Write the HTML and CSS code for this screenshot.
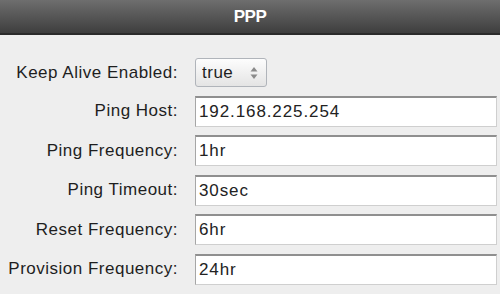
FILE: index.html
```html
<!DOCTYPE html>
<html lang="en">
<head>
  <meta charset="UTF-8">
  <title>PPP</title>
  <link rel="stylesheet" href="styles.css">
</head>
<body>

<div class="panel">
  <div class="panel-header">PPP</div>

  <form class="settings">
    <label class="field-label" for="keep-alive">Keep Alive Enabled:</label>
    <span class="select-wrap">
      <select id="keep-alive" class="select">
        <option selected>true</option>
        <option>false</option>
      </select>
      <svg class="select-arrows" viewBox="0 0 8 12" width="8" height="12">
        <polygon points="4,0 7.5,4.5 0.5,4.5" fill="#8a8a8a"/>
        <polygon points="4,12 7.5,7.5 0.5,7.5" fill="#8a8a8a"/>
      </svg>
    </span>

    <label class="field-label" for="ping-host">Ping Host:</label>
    <input id="ping-host" class="text-input" type="text" value="192.168.225.254">

    <label class="field-label" for="ping-freq">Ping Frequency:</label>
    <input id="ping-freq" class="text-input" type="text" value="1hr">

    <label class="field-label" for="ping-timeout">Ping Timeout:</label>
    <input id="ping-timeout" class="text-input" type="text" value="30sec">

    <label class="field-label" for="reset-freq">Reset Frequency:</label>
    <input id="reset-freq" class="text-input" type="text" value="6hr">

    <label class="field-label" for="prov-freq">Provision Frequency:</label>
    <input id="prov-freq" class="text-input" type="text" value="24hr">
  </form>
</div>

</body>
</html>
```

FILE: styles.css
```css
body {
  margin: 0;
  padding: 0;
  background: #eeeeee;
  font-family: 'Liberation Sans', Arial, sans-serif;
}

.panel {
  width: 500px;
}

.panel-header {
  height: 33px;
  line-height: 33px;
  background: linear-gradient(#6e6e6e, #3e3e3e);
  border-bottom: 2px solid #2b2b2b;
  color: #ffffff;
  font-size: 17px;
  font-weight: bold;
  letter-spacing: -0.5px;
  text-align: center;
}

.settings {
  display: grid;
  grid-template-columns: 178px 302px;
  column-gap: 17px;
  row-gap: 8.5px;
  align-items: center;
  padding-top: 23px;
}

.field-label {
  text-align: right;
  font-size: 17px;
  letter-spacing: 0.5px;
  color: #1e1e1e;
}

.select-wrap {
  position: relative;
  width: 72px;
  height: 29px;
}

.select {
  appearance: none;
  -webkit-appearance: none;
  width: 100%;
  height: 100%;
  margin: 0;
  padding: 0 0 0 6px;
  border: 1px solid #b0b4ba;
  border-radius: 3px;
  background: linear-gradient(#fdfdfd, #e4e4e4);
  font-family: 'Liberation Sans', Arial, sans-serif;
  font-size: 17px;
  letter-spacing: 0.5px;
  color: #1e1e1e;
}

.select-arrows {
  position: absolute;
  right: 9px;
  top: 9px;
  pointer-events: none;
}

.text-input {
  box-sizing: border-box;
  width: 302px;
  height: 31px;
  margin: 0;
  padding: 0 3px;
  border: 1px solid #cfcfcf;
  border-top: 2px solid #8f8f8f;
  border-left-color: #a6a6a6;
  background: #ffffff;
  font-family: 'Liberation Sans', Arial, sans-serif;
  font-size: 17px;
  letter-spacing: 0.9px;
  color: #222222;
}
```
